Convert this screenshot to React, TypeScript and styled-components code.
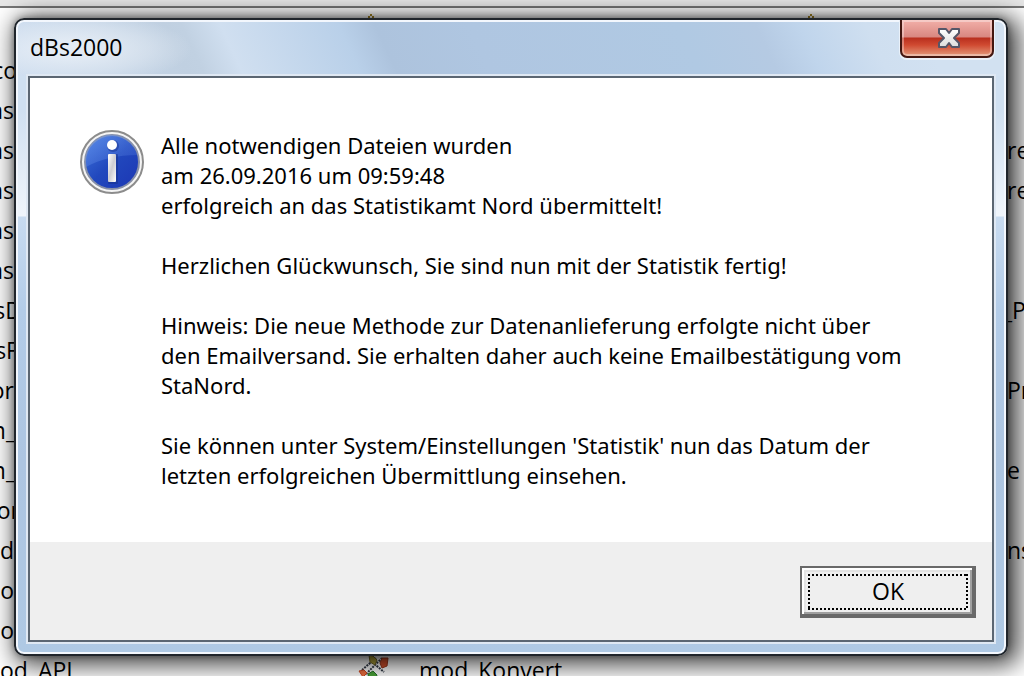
import React from "react";
import styled, { createGlobalStyle } from "styled-components";

const GlobalStyle = createGlobalStyle`
  * { box-sizing: border-box; }
  body {
    margin: 0;
    background: #fff;
    color: #000;
    font-family: "Open Sans", "Noto Sans", sans-serif;
    font-size: 23px;
    line-height: 30px;
  }
`;

const Desktop = styled.div`
  display: grid;
  grid-template-columns: minmax(0, 1fr);
  height: 100vh;
  overflow: hidden;
`;

const ObjectList = styled.div`
  grid-area: 1 / 1;
  display: flex;
  flex-direction: column;
  overflow: hidden;
  height: 100vh;
`;

const ListHeader = styled.div`
  flex: none;
  height: 8px;
  background: #e8e8e8;
  border-bottom: 2px solid #777;
`;

const PeekRow = styled.div`
  flex: none;
  display: flex;
  gap: 432px;
  height: 42px;
  padding: 6px 0 0 367px;
`;

const ListRow = styled.div`
  flex: none;
  display: flex;
  justify-content: space-between;
  height: 40px;
  line-height: 40px;
  white-space: nowrap;
`;

const LeftName = styled.span<{ $width: number }>`
  display: flex;
  justify-content: flex-end;
  width: ${(p) => p.$width}px;
`;

const RightName = styled.span<{ $wide: boolean }>`
  width: ${(p) => (p.$wide ? 22 : 17)}px;
`;

const LastRow = styled.div`
  flex: none;
  display: grid;
  grid-template-columns: 358px 61px 1fr;
  height: 40px;
  line-height: 40px;
`;

const Window = styled.section`
  grid-area: 1 / 1;
  align-self: start;
  position: relative;
  margin: 18px 16px 20px 14px;
  border: 2px solid #20252b;
  border-radius: 10px;
  box-shadow: inset 0 0 0 2px #f3f7fd, 0 0 6px rgba(0, 0, 0, 0.35),
    6px 4px 24px 5px rgba(0, 0, 0, 0.75);
  background: linear-gradient(
    180deg,
    #d0e0f1 0,
    #d0e0f1 90px,
    #f0f5fb 196px,
    #c8dbf0 197px,
    #b3cce8 290px,
    #adc5e1 440px,
    #afc9e4 100%
  );
  padding: 2px 12px 12px;
`;

const TitleBar = styled.header`
  display: flex;
  justify-content: space-between;
  align-items: flex-start;
  height: 54px;
  margin: 0 -10px;
  border-radius: 8px 8px 0 0;
  background: radial-gradient(
      ellipse 120px 36px at 54px 27px,
      rgba(234, 240, 247, 0.8) 20%,
      rgba(226, 234, 243, 0.5) 65%,
      rgba(215, 226, 239, 0) 100%
    ),
    linear-gradient(
      65deg,
      #cbdcf0 0,
      #c0d0e1 155px,
      #c1d1e2 170px,
      #d0dff0 205px,
      #b9d0e9 312px,
      #adc3dd 345px,
      #afc6e1 430px,
      #b0c9e3 620px,
      #b5cae3 690px,
      #c0d5ec 730px,
      #cfdff0 790px,
      #d2e1f1 840px,
      #d2e1f1 100%
    );
`;

const Title = styled.h1`
  margin: 0;
  padding: 10px 0 0 12px;
  font-size: 23px;
  line-height: 30px;
  font-weight: 400;
`;

const CloseButton = styled.button`
  display: flex;
  align-items: center;
  justify-content: center;
  width: 94px;
  height: 38px;
  margin: -2px 10px 0 0;
  padding: 0 0 0 4px;
  border: 2px solid #431711;
  border-top: 0;
  border-radius: 0 0 7px 7px;
  box-shadow: 0 1px 0 1px #eaf1f9, inset 0 0 0 2px rgba(255, 255, 255, 0.35);
  background: linear-gradient(
    180deg,
    #f2b0aa 0,
    #d98780 17px,
    #b92f1e 18px,
    #d04a31 25px,
    #e39a7c 36px
  );
`;

const Client = styled.div`
  border: 2px solid #5b6672;
  box-shadow: 0 0 0 2px #dfe8f3;
  background: #fff;
`;

const Content = styled.div`
  display: flex;
  align-items: flex-start;
  gap: 17px;
  padding: 52px 50px;
`;

const Message = styled.div`
  display: flex;
  flex-direction: column;
  gap: 30px;
  font-family: "Noto Sans", "Open Sans", sans-serif;
  font-size: 22px;
  white-space: nowrap;
`;

const Paragraph = styled.p`
  margin: 0;
`;

const Footer = styled.footer`
  display: flex;
  justify-content: flex-end;
  padding: 24px 16px 22px;
  background: #efefef;
`;

const OkButton = styled.button`
  width: 176px;
  height: 52px;
  padding: 6px;
  border: 2px solid #696969;
  box-shadow: inset -2px -2px #696969, inset 2px 2px #fff,
    inset -4px -4px #a0a0a0, inset 4px 4px #e3e3e3;
  background: #efefef;
  color: #000;
  font: inherit;
`;

const dots = (angle: string) =>
  `repeating-linear-gradient(${angle}, #000 0 2px, transparent 2px 4px)`;

const FocusRing = styled.span`
  display: block;
  width: 160px;
  height: 36px;
  line-height: 34px;
  background: ${dots("90deg")} 0 0 / 100% 2px no-repeat,
    ${dots("90deg")} 0 100% / 100% 2px no-repeat,
    ${dots("180deg")} 0 0 / 2px 100% no-repeat,
    ${dots("180deg")} 100% 0 / 2px 100% no-repeat;
`;

const InfoIcon = () => (
  <svg width="64" height="64" viewBox="0 0 64 64" aria-hidden="true">
    <defs>
      <linearGradient id="ball" x1="0" y1="0" x2="1" y2="1">
        <stop offset="0" stopColor="#3f74de" />
        <stop offset="0.5" stopColor="#2148bd" />
        <stop offset="1" stopColor="#1c36b4" />
      </linearGradient>
      <linearGradient id="gloss" x1="0" y1="0" x2="1" y2="1">
        <stop offset="0" stopColor="#6c9bf0" stopOpacity="0.6" />
        <stop offset="1" stopColor="#5078dc" stopOpacity="0.2" />
      </linearGradient>
      <linearGradient id="stem" x1="0" y1="0" x2="1" y2="1">
        <stop offset="0" stopColor="#fff" />
        <stop offset="0.5" stopColor="#cdcdd2" />
        <stop offset="1" stopColor="#fff" />
      </linearGradient>
    </defs>
    <circle cx="32" cy="32" r="31" fill="#f4f4f4" stroke="#8c8c8c" strokeWidth="2" />
    <circle cx="32" cy="32" r="27" fill="url(#ball)" stroke="#8790a8" strokeWidth="2" />
    <path d="M6 37A26 26 0 0 1 57 25C38 25 20 29 6 37Z" fill="url(#gloss)" />
    <circle cx="33" cy="16" r="6" fill="#173391" opacity="0.5" />
    <circle cx="32" cy="15" r="5" fill="#fff" />
    <rect x="28" y="24" width="10" height="30" rx="1" fill="#173391" opacity="0.6" />
    <rect x="28" y="24" width="8" height="28" rx="1" fill="url(#stem)" />
  </svg>
);

const CloseIcon = () => (
  <svg width="24" height="22" viewBox="0 0 24 22" aria-hidden="true">
    <defs>
      <linearGradient id="cross" x1="0" y1="0" x2="0" y2="1">
        <stop offset="0" stopColor="#fff" />
        <stop offset="1" stopColor="#dcdcdc" />
      </linearGradient>
    </defs>
    <path
      d="M2 2H9L12 6L15 2H22V6L17 11L22 16V20H15L12 16L9 20H2V16L7 11L2 6Z"
      fill="url(#cross)"
      stroke="#555668"
      strokeWidth="2"
      strokeLinejoin="round"
    />
  </svg>
);

const PeakIcon = () => (
  <svg width="8" height="6" viewBox="0 0 8 6" aria-hidden="true">
    <path d="M3 0H5V2H7V4H5V2H3V4H1V2H3Z" fill="#a58624" />
  </svg>
);

const ModuleIcon = () => (
  <svg width="32" height="32" viewBox="0 0 32 32" aria-hidden="true">
    <path d="M4 20L18 8M8 24L24 8M14 12L26 22" stroke="#333b48" strokeWidth="2" strokeDasharray="2 1" />
    <path d="M11 5L15 6L19 10L17 15L12 12Z" fill="#b2a33c" stroke="#766c2b" />
    <path d="M24 8L30 8L29 16L24 18L22 13Z" fill="#d5512c" stroke="#9d371c" />
    <path d="M1 21L6 20L9 23L5 27Z" fill="#ef7040" stroke="#cf4720" />
    <path d="M10 24L15 21L19 25L17 31L11 30Z" fill="#49a337" stroke="#237228" />
  </svg>
);

type Row = { left: string; width: number; right?: string };

const rows: Row[] = [
  { left: "co", width: 17 },
  { left: "as", width: 14 },
  { left: "as", width: 14, right: "re" },
  { left: "as", width: 14, right: "re" },
  { left: "as", width: 14 },
  { left: "as", width: 14 },
  { left: "sD", width: 22, right: "_P" },
  { left: "sF", width: 18 },
  { left: "or", width: 14, right: "Pr" },
  { left: "n_", width: 16 },
  { left: "n_", width: 16, right: "e" },
  { left: "or", width: 20 },
  { left: "d", width: 14, right: "ns" },
  { left: "o", width: 14 },
  { left: "o", width: 14 },
];

export default function App() {
  return (
    <>
      <GlobalStyle />
      <Desktop>
        <ObjectList>
          <ListHeader />
          <PeekRow>
            <PeakIcon />
            <PeakIcon />
          </PeekRow>
          {rows.map((row, i) => (
            <ListRow key={i}>
              <LeftName $width={row.width}>{row.left}</LeftName>
              <RightName $wide={row.right === "_P"}>{row.right}</RightName>
            </ListRow>
          ))}
          <LastRow>
            <span>od_API</span>
            <ModuleIcon />
            <span>mod_Konvert</span>
          </LastRow>
        </ObjectList>
        <Window role="dialog" aria-labelledby="dialog-title">
          <TitleBar>
            <Title id="dialog-title">dBs2000</Title>
            <CloseButton type="button" aria-label="Schließen">
              <CloseIcon />
            </CloseButton>
          </TitleBar>
          <Client>
            <Content>
              <InfoIcon />
              <Message>
                <Paragraph>
                  Alle notwendigen Dateien wurden
                  <br />
                  am 26.09.2016 um 09:59:48
                  <br />
                  erfolgreich an das Statistikamt Nord übermittelt!
                </Paragraph>
                <Paragraph>
                  Herzlichen Glückwunsch, Sie sind nun mit der Statistik fertig!
                </Paragraph>
                <Paragraph>
                  Hinweis: Die neue Methode zur Datenanlieferung erfolgte nicht über
                  <br />
                  den Emailversand. Sie erhalten daher auch keine Emailbestätigung vom
                  <br />
                  StaNord.
                </Paragraph>
                <Paragraph>
                  Sie können unter System/Einstellungen 'Statistik' nun das Datum der
                  <br />
                  letzten erfolgreichen Übermittlung einsehen.
                </Paragraph>
              </Message>
            </Content>
            <Footer>
              <OkButton type="button">
                <FocusRing>OK</FocusRing>
              </OkButton>
            </Footer>
          </Client>
        </Window>
      </Desktop>
    </>
  );
}
